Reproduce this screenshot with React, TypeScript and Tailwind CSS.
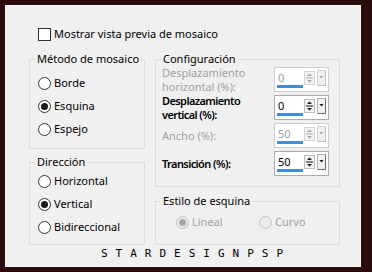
import React from "react";

const Radio = ({ checked, disabled }: { checked?: boolean; disabled?: boolean }) => (
  <span
    className={
      "flex h-[13px] w-[13px] shrink-0 items-center justify-center rounded-full border " +
      (disabled ? "border-[#c4c4c4] bg-[#ececec]" : "border-[#333333] bg-white")
    }
  >
    {checked && (
      <span className={"h-[7px] w-[7px] rounded-full " + (disabled ? "bg-[#a8a8a8]" : "bg-[#1a1a1a]")} />
    )}
  </span>
);

const RadioRow = ({ label, checked, disabled }: { label: string; checked?: boolean; disabled?: boolean }) => (
  <div className={"flex h-[23px] items-center gap-[3px] " + (disabled ? "text-[#a0a0a0]" : "text-black")}>
    <Radio checked={checked} disabled={disabled} />
    <span>{label}</span>
  </div>
);

const SpinButtons = ({ disabled }: { disabled?: boolean }) => {
  const ink = disabled ? "#a8a8a8" : "#111111";
  return (
    <svg width="23" height="17" viewBox="0 0 23 17">
      <rect x="0.5" y="1.5" width="10" height="13" fill={disabled ? "#f4f4f4" : "#f2f2f2"} stroke={disabled ? "#d6d6d6" : "#bdbdbd"} />
      <polygon points="3,6 8,6 5.5,3.5" fill={ink} />
      <line x1="2" y1="8" x2="9" y2="8" stroke={ink} />
      <polygon points="3,10 8,10 5.5,12.5" fill={ink} />
      <rect x="13.5" y="0.5" width="8" height="15" fill="#f0f0f0" stroke={disabled ? "#d0d0d0" : "#b0b0b0"} />
      <line x1="21.5" y1="1" x2="21.5" y2="16" stroke={disabled ? "#c0c0c0" : "#6d6d6d"} />
      <line x1="14" y1="15.5" x2="22" y2="15.5" stroke={disabled ? "#c0c0c0" : "#6d6d6d"} />
      <polygon points="15.5,6 19.5,6 17.5,8.5" fill={ink} />
    </svg>
  );
};

const Spin = ({ value, disabled }: { value: string; disabled?: boolean }) => (
  <div
    className={
      "relative flex h-[25px] w-[55px] shrink-0 items-start border bg-white " +
      (disabled ? "border-[#cfcfcf]" : "border-[#abadb3]")
    }
  >
    <span className={"pl-[3px] pt-[3px] leading-[14px] " + (disabled ? "text-[#a0a0a0]" : "text-black")}>{value}</span>
    <div className="ml-auto mr-[1px] mt-[2px]">
      <SpinButtons disabled={disabled} />
    </div>
    <div className="absolute bottom-[3px] left-[2px] h-[3px] w-[26px] bg-[#3c8ee0]" />
  </div>
);

const SpinRow = ({ label, value, disabled }: { label: React.ReactNode; value: string; disabled?: boolean }) => (
  <div className="flex h-[25px] items-center">
    <div
      className={
        "w-[112px] leading-[14px] " +
        (disabled ? "text-[#a0a0a0]" : "font-semibold tracking-[-0.6px] text-black")
      }
    >
      {label}
    </div>
    <Spin value={value} disabled={disabled} />
  </div>
);

export default function App() {
  return (
    <div className="h-[272px] w-[372px] bg-[#2b0b0b] pb-[5px] pl-[5px] pr-[11px] pt-[5px] font-['Noto_Sans',sans-serif] text-[11px]">
      <div className="flex h-full w-full flex-col border border-[#f8f8f8] bg-[#f0f0f0] pl-[23px] pt-[21px] text-black">
        <div className="ml-[9px] flex items-center gap-[3px] leading-[14px]">
          <span className="h-[13px] w-[13px] border border-[#333333] bg-white" />
          <span>Mostrar vista previa de mosaico</span>
        </div>

        <div className="mt-[11px] flex gap-[10px]">
          <div className="flex w-[116px] flex-col gap-[6px]">
            <fieldset className="h-[97px] border border-[#dcdcdc] pl-[8px]">
              <legend className="ml-[-3px] px-[2px] leading-[14px]">Método de mosaico</legend>
              <div className="pt-[6px]">
                <RadioRow label="Borde" />
                <RadioRow label="Esquina" checked />
                <RadioRow label="Espejo" />
              </div>
            </fieldset>
            <fieldset className="h-[90px] border border-[#dcdcdc] pl-[8px]">
              <legend className="ml-[-3px] px-[2px] leading-[14px]">Dirección</legend>
              <div className="pt-[1px]">
                <RadioRow label="Horizontal" />
                <RadioRow label="Vertical" checked />
                <RadioRow label="Bidireccional" />
              </div>
            </fieldset>
          </div>

          <div className="flex w-[185px] flex-col gap-[7px]">
            <fieldset className="h-[135px] border border-[#dcdcdc] pl-[6px]">
              <legend className="ml-[-1px] px-[2px] leading-[14px]">Configuración</legend>
              <div className="flex flex-col gap-[3px] pt-[1px]">
                <SpinRow
                  disabled
                  value="0"
                  label={
                    <>
                      Desplazamiento
                      <br />
                      horizontal (%):
                    </>
                  }
                />
                <SpinRow
                  value="0"
                  label={
                    <>
                      Desplazamiento
                      <br />
                      vertical (%):
                    </>
                  }
                />
                <SpinRow disabled value="50" label="Ancho (%):" />
                <SpinRow value="50" label="Transición (%):" />
              </div>
            </fieldset>
            <fieldset className="h-[51px] border border-[#dcdcdc] pl-[20px]">
              <legend className="ml-[-15px] px-[2px] leading-[14px]">Estilo de esquina</legend>
              <div className="flex pt-[3px]">
                <div className="w-[83px]">
                  <RadioRow label="Lineal" checked disabled />
                </div>
                <RadioRow label="Curvo" disabled />
              </div>
            </fieldset>
          </div>
        </div>

        <div className="ml-[72px] mt-[4px] font-['DejaVu_Sans_Mono',monospace] text-[11px] leading-[10px] tracking-[8px]">
          STARDESIGNPSP
        </div>
      </div>
    </div>
  );
}
